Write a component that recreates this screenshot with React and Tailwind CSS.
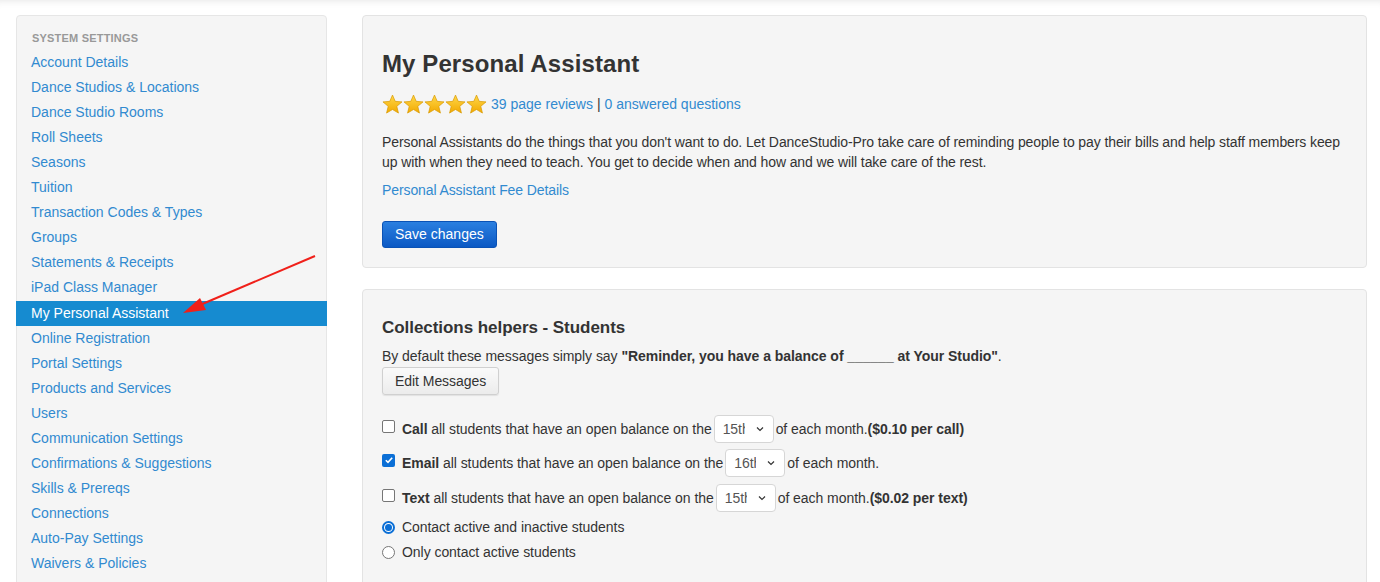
import React from 'react';

const items = [
  'Account Details',
  'Dance Studios & Locations',
  'Dance Studio Rooms',
  'Roll Sheets',
  'Seasons',
  'Tuition',
  'Transaction Codes & Types',
  'Groups',
  'Statements & Receipts',
  'iPad Class Manager',
  'My Personal Assistant',
  'Online Registration',
  'Portal Settings',
  'Products and Services',
  'Users',
  'Communication Settings',
  'Confirmations & Suggestions',
  'Skills & Prereqs',
  'Connections',
  'Auto-Pay Settings',
  'Waivers & Policies',
];

function Star() {
  return (
    <svg width="21" height="21" viewBox="0 0 24 24">
      <defs>
        <linearGradient id="sg" x1="0" y1="0" x2="0" y2="1">
          <stop offset="0" stopColor="#ffd84a" />
          <stop offset="1" stopColor="#f2a900" />
        </linearGradient>
      </defs>
      <path
        d="M12 1.2l3.1 7.2 7.8.6-6 5.1 1.9 7.7L12 17.7l-6.8 4.1 1.9-7.7-6-5.1 7.8-.6z"
        fill="url(#sg)"
        stroke="#d99a00"
        strokeWidth="0.8"
      />
    </svg>
  );
}

function Select({ value }) {
  return (
    <span className="inline-flex items-center justify-between w-[60px] h-[28px] mx-[2px] px-[8px] bg-white border border-[#d6d6d6] rounded-[4px] text-[14px] text-[#555] align-middle">
      <span className="w-[22px] overflow-hidden whitespace-nowrap">{value}</span>
      <svg width="10" height="10" viewBox="0 0 10 10">
        <path d="M2 3.5l3 3 3-3" fill="none" stroke="#333" strokeWidth="1.2" />
      </svg>
    </span>
  );
}

function Check({ checked }) {
  if (checked) {
    return (
      <span className="inline-flex w-[13px] h-[13px] rounded-[2px] bg-[#0b6fd6] items-center justify-center">
        <svg width="10" height="10" viewBox="0 0 10 10">
          <path d="M1.8 5.2l2.2 2.2 4.2-4.6" fill="none" stroke="#fff" strokeWidth="1.6" />
        </svg>
      </span>
    );
  }
  return <span className="inline-block w-[13px] h-[13px] rounded-[2px] border border-[#767676] bg-white" />;
}

function Radio({ checked }) {
  if (checked) {
    return (
      <span className="inline-flex w-[13px] h-[13px] rounded-full border-2 border-[#0b6fd6] bg-white items-center justify-center">
        <span className="w-[7px] h-[7px] rounded-full bg-[#0b6fd6]" />
      </span>
    );
  }
  return <span className="inline-block w-[13px] h-[13px] rounded-full border border-[#767676] bg-white" />;
}

export default function App() {
  return (
    <div
      className="relative w-[1380px] h-[582px] overflow-hidden bg-white shadow-[inset_0_8px_8px_-8px_rgba(0,0,0,0.12)]"
      style={{ fontFamily: '"Liberation Sans", Arial, sans-serif' }}
    >
      <div className="flex gap-[35px] pl-[16px] pt-[15px]">
        <div className="w-[311px] h-[600px] shrink-0 bg-[#f5f5f5] border border-[#e6e6e6] rounded-[4px] pt-[14px]">
          <div className="px-[15px] h-[16px] leading-[16px] text-[11px] font-bold text-[#999] tracking-[0.2px] mb-[4px]">
            SYSTEM SETTINGS
          </div>
          {items.map((it) =>
            it === 'My Personal Assistant' ? (
              <div key={it} className="h-[25px] leading-[24px] mt-[1px] px-[14px] text-[14px] text-white bg-[#168bd0] -mx-px">
                <span className="pl-px">{it}</span>
              </div>
            ) : (
              <div key={it} className="h-[25px] leading-[25px] px-[14px] text-[14px] text-[#318ad0]">
                {it}
              </div>
            )
          )}
        </div>

        <div className="w-[1005px] flex flex-col gap-[21px]">
          <div className="bg-[#f5f5f5] border border-[#e3e3e3] rounded-[4px] px-[19px] pt-[35px] pb-[19px] text-[14px] text-[#333]">
            <h1 className="text-[24px] leading-[26px] font-bold text-[#333] tracking-[0.1px]">My Personal Assistant</h1>
            <div className="flex items-center h-[20px] mt-[17px]">
              <div className="flex mr-[4px]">
                <Star />
                <Star />
                <Star />
                <Star />
                <Star />
              </div>
              <span className="text-[#318ad0]">39 page reviews</span>
              <span className="mx-[4px]">|</span>
              <span className="text-[#318ad0]">0 answered questions</span>
            </div>
            <p className="leading-[20px] mt-[18px] tracking-[-0.1px]">
              Personal Assistants do the things that you don't want to do. Let DanceStudio-Pro take care of reminding people to pay their bills and help staff members keep up with when they need to teach. You get to decide when and how and we will take care of the rest.
            </p>
            <div className="leading-[20px] mt-[8px] text-[#318ad0] tracking-[-0.1px]">Personal Assistant Fee Details</div>
            <button className="mt-[21px] h-[27px] px-[12px] rounded-[3px] text-white text-[14px] bg-gradient-to-b from-[#2a7fe0] to-[#0b59c4] border border-[#0a52b5]">
              Save changes
            </button>
          </div>

          <div className="h-[320px] bg-[#f5f5f5] border border-[#e3e3e3] rounded-[4px] px-[19px] pt-[28px] text-[14px] text-[#333] tracking-[-0.05px]">
            <h2 className="text-[17px] leading-[20px] font-bold">Collections helpers - Students</h2>
            <div className="leading-[20px] mt-[8px]">
              By default these messages simply say <b>"Reminder, you have a balance of ______ at Your Studio"</b>.
            </div>
            <button className="mt-[1px] h-[28px] px-[12px] rounded-[3px] text-[14px] text-[#333] bg-gradient-to-b from-[#fafafa] to-[#ececec] border border-[#d0d0d0] shadow-[0_1px_1px_rgba(0,0,0,0.08)]">
              Edit Messages
            </button>
            <div className="mt-[20px] flex flex-col">
              <div className="flex items-center h-[28px]">
                <span className="mr-[7px] -mt-[6px] flex"><Check /></span>
                <b>Call</b>&nbsp;all students that have an open balance on the
                <Select value="15th" />
                of each month.<b>($0.10 per call)</b>
              </div>
              <div className="flex items-center h-[28px] mt-[6px]">
                <span className="mr-[7px] -mt-[6px] flex"><Check checked /></span>
                <b>Email</b>&nbsp;all students that have an open balance on the
                <Select value="16th" />
                of each month.
              </div>
              <div className="flex items-center h-[28px] mt-[7px]">
                <span className="mr-[7px] -mt-[6px] flex"><Check /></span>
                <b>Text</b>&nbsp;all students that have an open balance on the
                <Select value="15th" />
                of each month.<b>($0.02 per text)</b>
              </div>
              <div className="flex items-center h-[25px] mt-[3px]">
                <span className="mr-[7px] flex"><Radio checked /></span>
                Contact active and inactive students
              </div>
              <div className="flex items-center h-[25px]">
                <span className="mr-[7px] flex"><Radio /></span>
                Only contact active students
              </div>
            </div>
          </div>
        </div>
      </div>

      <svg className="absolute left-0 top-0 pointer-events-none" width="1380" height="582">
        <line x1="315" y1="256" x2="200" y2="305" stroke="#f0201a" strokeWidth="2" />
        <path d="M183 313 L200 298 L206 310 Z" fill="#f0201a" />
      </svg>
    </div>
  );
}
